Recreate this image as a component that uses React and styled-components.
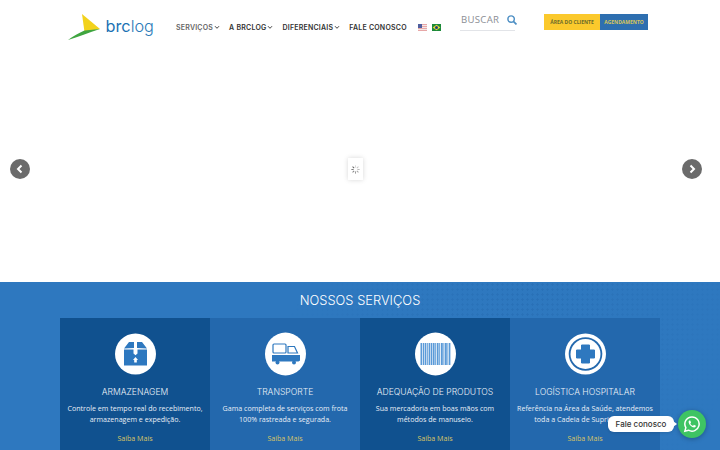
import React from "react";
import styled, { createGlobalStyle } from "styled-components";

const Global = createGlobalStyle`
  html, body { margin: 0; padding: 0; background: #fff; overflow: hidden; }
  body { width: 720px; height: 450px; font-family: "Open Sans", sans-serif; }
  * { box-sizing: border-box; }
`;
const Page = styled.div`width:720px;height:450px;overflow:hidden;position:relative;display:flex;flex-direction:column;`;
const Header = styled.header`height:46px;display:flex;align-items:flex-start;padding-left:68px;background:#fff;flex:none;`;
const Logo = styled.div`display:flex;width:86px;height:30px;margin-top:12px;position:relative;flex:none;`;
const LogoWord = styled.span`
  position:absolute;left:37.500px;top:4px;font:300 16.300px/20px Inter,"Liberation Sans",sans-serif;color:#2a7ab8;
  b{font-weight:400;color:#1c72b4;}
`;
const Nav = styled.nav`display:flex;align-items:center;gap:9px;margin:21px 0 0 22px;height:13px;width:232px;flex:none;`;
const NavItem = styled.a`display:flex;align-items:center;gap:1px;font:600 7px/13px Inter,"Liberation Sans",sans-serif;letter-spacing:.22px;color:${p=>p.$muted?"#666":"#333"};white-space:nowrap;`;
const Flags = styled.div`display:flex;gap:5px;margin:24px 0 0 10px;flex:none;`;
const Flag = styled.svg`width:9px;height:7px;display:block;`;
const Search = styled.div`width:55px;height:19px;margin:12px 0 0 19px;flex:none;border-bottom:1px solid #e2e4e8;display:flex;justify-content:space-between;align-items:center;padding:0 0 2px 1px;font:400 9.600px/16px "Open Sans",sans-serif;letter-spacing:.3px;color:#8b8e94;svg{margin-right:-2px;}`;
const Buttons = styled.div`display:flex;margin:14px 0 0 29px;flex:none;`;
const Cta = styled.a`height:16px;display:flex;align-items:center;justify-content:center;width:${p=>p.$w}px;background:${p=>p.$bg};color:${p=>p.$c};font:700 5px/16px "Open Sans",sans-serif;`;
const Hero = styled.section`height:236px;flex:none;position:relative;background:#fff;`;
const Arrow = styled.button`position:absolute;top:113px;${p=>p.$right?"right:18px":"left:10px"};width:20px;height:20px;border:0;padding:0;border-radius:50%;background:#6b6b6b;display:flex;align-items:center;justify-content:center;`;
const Loader = styled.div`position:absolute;left:348px;top:112px;width:15px;height:22px;background:#fff;box-shadow:0 0 5px rgba(0,0,0,.16);display:flex;align-items:center;justify-content:center;`;
const Services = styled.section`flex:1;position:relative;background:#2e78bf;display:flex;flex-direction:column;align-items:center;overflow:hidden;`;
const Dots = styled.div`position:absolute;right:0;top:0;width:470px;height:170px;background-image:radial-gradient(rgba(20,78,145,.16) 1px,transparent 1.3px);background-size:5px 5px;mask-image:linear-gradient(120deg,transparent 10%,#000 50%,transparent 95%);`;
const Title = styled.h2`position:relative;margin:11px 0 10px;font:300 12.900px/15px Inter,"Liberation Sans",sans-serif;color:#fff;`;
const Cards = styled.div`position:relative;display:grid;grid-template-columns:repeat(4,150px);width:600px;`;
const Card = styled.article`height:132px;background:${p=>p.$dark?"#10518f":"#2368ad"};display:flex;flex-direction:column;align-items:center;padding-top:14px;color:#fff;text-align:center;`;
const IconDisc = styled.div`width:41px;height:44px;flex:none;svg{display:block;width:41px;height:44px;}`;
const CardTitle = styled.h3`margin:10px 0 0;font:300 8.600px/13px Inter,"Liberation Sans",sans-serif;color:#eaf0f7;white-space:nowrap;`;
const CardText = styled.p`margin:4px 0 0;font:400 7.100px/11.300px "Open Sans",sans-serif;color:#e8eef6;white-space:nowrap;`;
const More = styled.a`margin-top:6px;font:400 7.100px/12px "Open Sans",sans-serif;color:#d7c565;`;
const Chat = styled.div`position:absolute;right:14px;top:410px;display:flex;align-items:center;`;
const Bubble = styled.div`position:relative;background:#fff;border-radius:6px;height:16px;width:66px;display:flex;align-items:center;justify-content:center;font:500 8px/16px Inter,"Liberation Sans",sans-serif;color:#333;margin-right:4px;box-shadow:0 1px 3px rgba(0,0,0,.12);
  &:after{content:"";position:absolute;right:-3px;top:5px;border-left:4px solid #fff;border-top:3px solid transparent;border-bottom:3px solid transparent;}`;
const WhatsBtn = styled.div`width:28px;height:28px;border-radius:50%;background:#3ec463;display:flex;align-items:center;justify-content:center;box-shadow:0 1px 5px rgba(0,0,0,.28);`;

const Chevron = () => <svg width="6" height="5" viewBox="0 0 6 5"><path d="M1 1.2 3 3.3 5 1.2" fill="none" stroke="#444" strokeWidth="1"/></svg>;
const BoxIcon = () => <svg viewBox="0 0 41 44"><circle cx="20.5" cy="22" r="20.5" fill="#fff"/><path d="M9 16.500 14 10h5v6zM32 16.500 27 10h-5v6z" fill="#2e78bf"/><path d="M9 17.500h9.500v4l2 1.800 2-1.800v-4H32v16H9z" fill="#2e78bf"/><path d="M20.500 25 23 28h-1.200v2.500h-2.600V28H18z" fill="#fff"/></svg>;
const TruckIcon = () => <svg viewBox="0 0 41 44"><ellipse cx="20.500" cy="22" rx="20.500" ry="21.500" fill="#fff"/><rect x="8" y="12" width="13" height="9" rx="1" fill="none" stroke="#2e78bf" strokeWidth="1.200"/><path d="M23 14.500h6.500l3 6.500H23z" fill="none" stroke="#2e78bf" strokeWidth="1.200"/><path d="M7 23h28v5.500l-1.500 1H7z" fill="#2e78bf"/><circle cx="12.500" cy="30.500" r="2" fill="#2e78bf"/><circle cx="29" cy="30.500" r="2" fill="#2e78bf"/></svg>;
const bars=[[5.5,1.8],[8,1],[9.6,1.8],[12,.8],[13.600,1.800],[16,1],[17.600,2],[20.200,.9],[21.800,1.800],[24.200,.8],[25.800,2],[28.400,1],[30,1.800],[32.400,.8],[33.800,1.600]];
const BarcodeIcon = () => <svg viewBox="0 0 41 44"><ellipse cx="20.500" cy="22" rx="20.500" ry="21.500" fill="#fff"/>{bars.map(([x,w])=><rect key={x} x={x} y="11" width={w} height="22" fill="#5a9ad8"/>)}</svg>;
const CrossIcon = () => <svg viewBox="0 0 41 44"><circle cx="20.500" cy="22" r="20.500" fill="#fff"/><circle cx="20.500" cy="22" r="16.800" fill="#2368ad"/><circle cx="20.500" cy="22" r="15" fill="#fff"/><path d="M16.500 13h8v5h5v8h-5v5h-8v-5h-5v-8h5z" fill="#2e78bf" stroke="#2e78bf" strokeLinejoin="round" strokeWidth="1"/></svg>;

const cards=[
  {dark:true,icon:<BoxIcon/>,title:"ARMAZENAGEM",lines:["Controle em tempo real do recebimento,","armazenagem e expedição."]},
  {icon:<TruckIcon/>,title:"TRANSPORTE",lines:["Gama completa de serviços com frota","100% rastreada e segurada."]},
  {dark:true,icon:<BarcodeIcon/>,title:"ADEQUAÇÃO DE PRODUTOS",lines:["Sua mercadoria em boas mãos com","métodos de manuseio."]},
  {icon:<CrossIcon/>,title:"LOGÍSTICA HOSPITALAR",lines:["Referência na Área da Saúde, atendemos","toda a Cadeia de Suprimentos."]},
];

export default function App(){
  return <Page><Global/>
    <Header>
      <Logo>
        <svg width="36" height="30" viewBox="0 0 36 30"><path d="M14 2 32 17 16.500 20z" fill="#f2d21c"/><path d="M0 28C5 24 11 21 16.500 18.500L32 17C21 20.500 10 25 0 28z" fill="#3fa540"/></svg>
        <LogoWord><b>brc</b>log</LogoWord>
      </Logo>
      <Nav>
        <NavItem $muted>SERVIÇOS <Chevron/></NavItem>
        <NavItem>A BRCLOG <Chevron/></NavItem>
        <NavItem>DIFERENCIAIS <Chevron/></NavItem>
        <NavItem>FALE CONOSCO</NavItem>
      </Nav>
      <Flags>
        <Flag viewBox="0 0 9 7"><rect width="9" height="7" fill="#e7a7a7"/><rect y="1" width="9" height="1" fill="#f5e6e6"/><rect y="3" width="9" height="1" fill="#f5e6e6"/><rect y="5" width="9" height="1" fill="#f5e6e6"/><rect width="4" height="4" fill="#4f5e9e"/></Flag>
        <Flag viewBox="0 0 9 7"><rect width="9" height="7" fill="#1c8a3a"/><path d="M4.500.8 8.300 3.500 4.500 6.200.7 3.500z" fill="#e8d63a"/><circle cx="4.500" cy="3.500" r="1.500" fill="#1e3f7e"/></Flag>
      </Flags>
      <Search>BUSCAR
        <svg width="10" height="10" viewBox="0 0 9 9"><circle cx="3.700" cy="3.700" r="2.900" fill="none" stroke="#4d8fc4" strokeWidth="1.300"/><path d="M5.800 5.800 8.500 8.500" stroke="#4d8fc4" strokeWidth="1.500"/></svg>
      </Search>
      <Buttons>
        <Cta $w={56} $bg="#fbc92c" $c="#6b6b2b">ÁREA DO CLIENTE</Cta>
        <Cta $w={48} $bg="#2e6fb0" $c="#d9c75a">AGENDAMENTO</Cta>
      </Buttons>
    </Header>
    <Hero>
      <Arrow><svg width="8" height="10" viewBox="0 0 8 10"><path d="M5.500 1.500 2 5l3.500 3.500" fill="none" stroke="#fff" strokeWidth="2"/></svg></Arrow>
      <Loader><svg width="9" height="11" viewBox="0 0 12 12">{[...Array(8)].map((_,i)=><rect key={i} x="5.400" y="0.500" width="1.200" height="3" fill="#555" opacity={0.25+i*0.1} transform={`rotate(${i*45} 6 6)`}/>)}</svg></Loader>
      <Arrow $right><svg width="8" height="10" viewBox="0 0 8 10"><path d="M2.500 1.500 6 5 2.500 8.500" fill="none" stroke="#fff" strokeWidth="2"/></svg></Arrow>
    </Hero>
    <Services>
      <Dots/>
      <Title>NOSSOS SERVIÇOS</Title>
      <Cards>
        {cards.map(c=><Card key={c.title} $dark={c.dark}>
          <IconDisc>{c.icon}</IconDisc>
          <CardTitle>{c.title}</CardTitle>
          <CardText>{c.lines[0]}<br/>{c.lines[1]}</CardText>
          <More>Saiba Mais</More>
        </Card>)}
      </Cards>
    </Services>
    <Chat>
      <Bubble>Fale conosco</Bubble>
      <WhatsBtn><svg width="18" height="18" viewBox="0 0 24 24"><path d="M12 2.500a9.500 9.500 0 0 0-8.200 14.300L2.500 21.500l4.800-1.250A9.500 9.500 0 1 0 12 2.500z" fill="none" stroke="#fff" strokeWidth="2"/><path d="M8.800 7.300c-.5 0-1.300.7-1.300 2 0 2.800 3.900 7.300 7.400 7.300 1.400 0 2.200-1 2.200-1.800 0-.4-.1-.6-.3-.7l-1.900-.9c-.3-.1-.5 0-.6.2l-.7.900c-.2.200-.4.200-.6.100-1.300-.6-2.500-1.700-3.100-2.900-.1-.2-.1-.4.100-.6l.5-.6c.2-.2.200-.4.100-.6l-.8-1.900c-.1-.3-.3-.5-.5-.5z" fill="#fff"/></svg></WhatsBtn>
    </Chat>
  </Page>;
}
